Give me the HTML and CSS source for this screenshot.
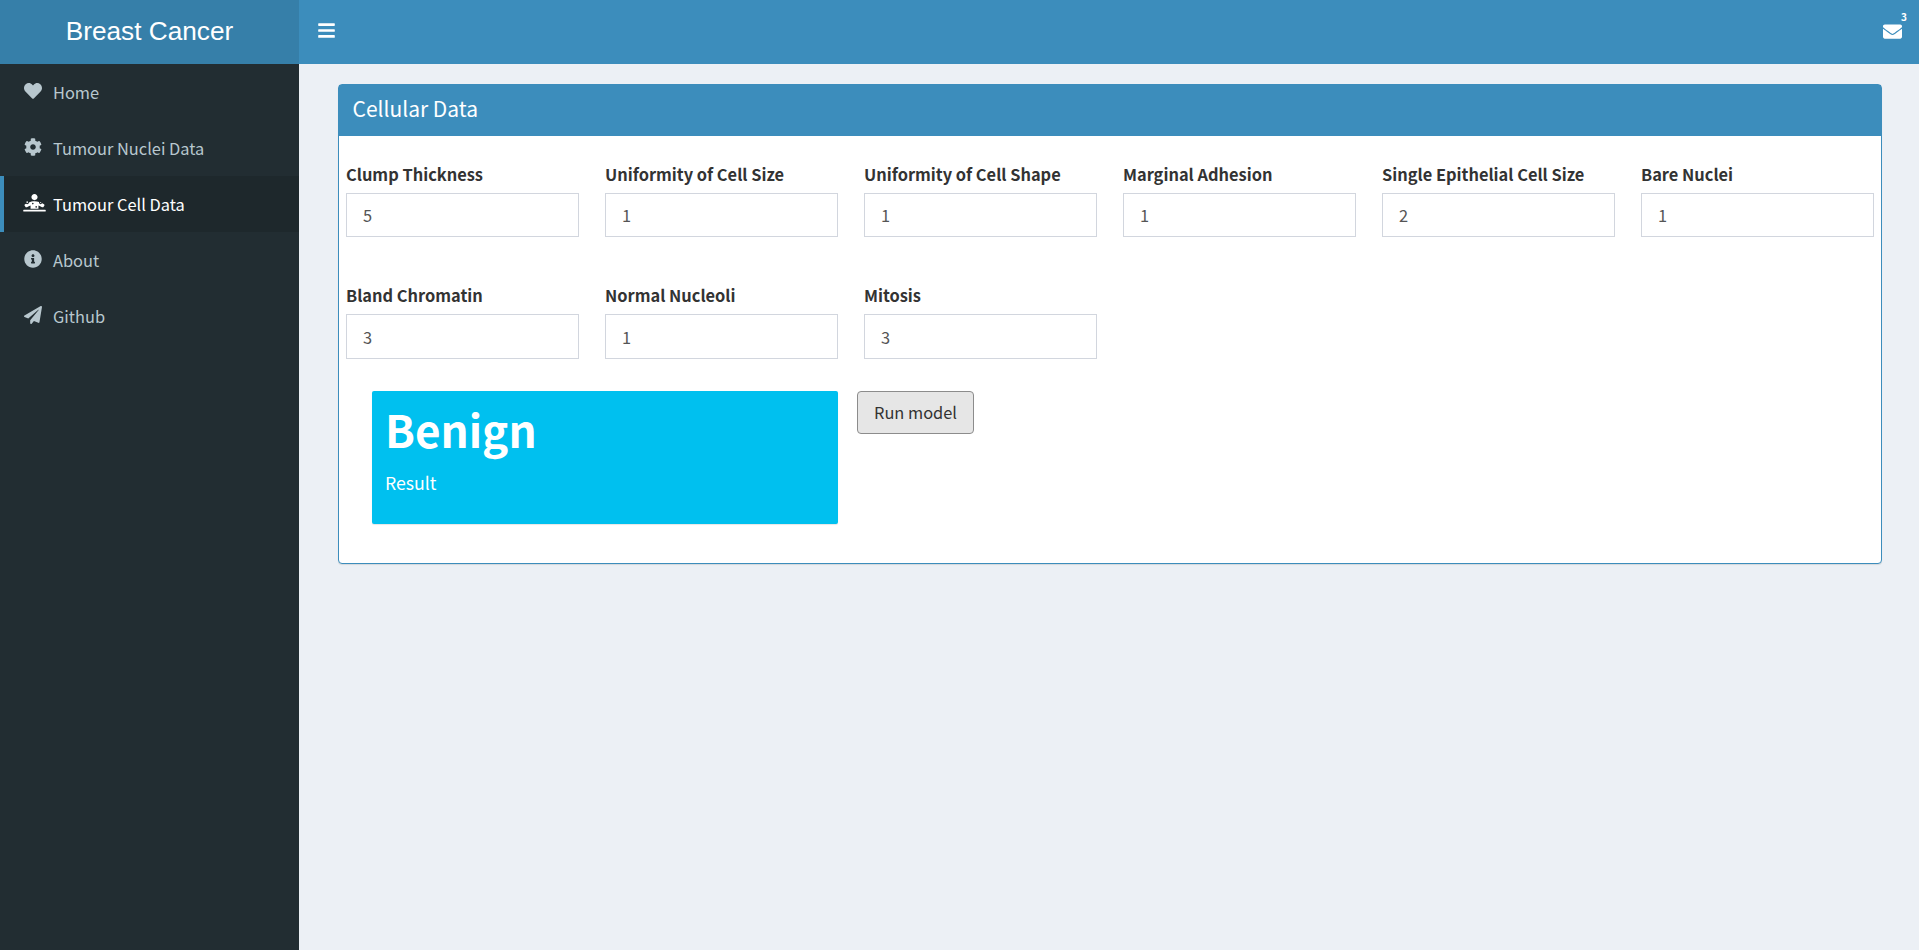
FILE: index.html
```html
<!DOCTYPE html>
<html>
<head>
	<title>Breast Cancer</title>
	<link rel="stylesheet" href="styles.css">
</head>
<body>
	<div class="topbar">
		<div class="logo">Breast Cancer</div>
		<div class="navbar">
			<svg class="toggle" viewBox="0 0 448 512"><path d="M16 132h416c8.837 0 16-7.163 16-16V76c0-8.837-7.163-16-16-16H16C7.163 60 0 67.163 0 76v40c0 8.837 7.163 16 16 16zm0 160h416c8.837 0 16-7.163 16-16v-40c0-8.837-7.163-16-16-16H16c-8.837 0-16 7.163-16 16v40c0 8.837 7.163 16 16 16zm0 160h416c8.837 0 16-7.163 16-16v-40c0-8.837-7.163-16-16-16H16c-8.837 0-16 7.163-16 16v40c0 8.837 7.163 16 16 16z"/></svg>
			<div class="messages">
				<svg class="mail" viewBox="0 0 512 512"><path d="M502.3 190.8c3.9-3.1 9.700-.2 9.700 4.700V400c0 26.500-21.500 48-48 48H48c-26.500 0-48-21.500-48-48V195.600c0-5 5.700-7.800 9.700-4.700 22.400 17.400 52.100 39.500 154.100 113.600 21.100 15.400 56.700 47.800 92.200 47.600 35.700.3 72-32.800 92.300-47.600 102-74.100 131.600-96.300 154-113.700zM256 320c23.200.4 56.600-29.200 73.400-41.400 132.700-96.300 142.800-104.700 173.400-128.700 5.800-4.500 9.200-11.500 9.200-18.900v-19c0-26.500-21.500-48-48-48H48C21.500 64 0 85.500 0 112v19c0 7.400 3.400 14.300 9.200 18.900 30.600 23.900 40.700 32.400 173.400 128.700 16.800 12.200 50.200 41.800 73.400 41.400z"/></svg>
				<span class="badge">3</span>
			</div>
		</div>
	</div>

	<div class="main">
		<ul class="sidebar">
			<li>
				<svg class="icon" viewBox="0 0 512 512"><path d="M462.3 62.600C407.500 15.900 326 24.300 275.700 76.200L256 96.500l-19.700-20.300C186.100 24.300 104.500 15.900 49.700 62.600c-62.800 53.600-66.100 149.800-9.900 207.900l193.500 199.800c12.500 12.900 32.800 12.900 45.300 0l193.500-199.800c56.300-58.100 53-154.300-9.800-207.900z"/></svg>
				<span>Home</span>
			</li>
			<li>
				<svg class="icon" viewBox="0 0 512 512"><path d="M487.400 315.700l-42.600-24.600c4.300-23.200 4.300-47 0-70.200l42.600-24.600c4.900-2.800 7.100-8.600 5.500-14-11.100-35.600-30-67.800-54.700-94.600-3.800-4.100-10-5.100-14.800-2.300L380.800 110c-17.900-15.400-38.500-27.300-60.800-35.100V25.800c0-5.600-3.900-10.500-9.400-11.700-36.700-8.200-74.300-7.800-109.200 0-5.500 1.200-9.400 6.100-9.400 11.700V75c-22.200 7.900-42.800 19.800-60.800 35.100L88.700 85.500c-4.900-2.800-11-1.900-14.800 2.300-24.700 26.700-43.600 58.900-54.700 94.600-1.700 5.400.6 11.200 5.500 14L67.300 221c-4.300 23.200-4.300 47 0 70.200l-42.600 24.600c-4.900 2.800-7.100 8.600-5.500 14 11.100 35.600 30 67.800 54.700 94.600 3.800 4.100 10 5.100 14.800 2.300l42.600-24.600c17.900 15.400 38.500 27.300 60.800 35.100v49.200c0 5.600 3.900 10.500 9.400 11.700 36.700 8.200 74.300 7.800 109.200 0 5.500-1.200 9.400-6.100 9.400-11.700v-49.200c22.200-7.900 42.800-19.800 60.800-35.100l42.600 24.600c4.900 2.800 11 1.900 14.800-2.300 24.700-26.700 43.600-58.900 54.700-94.600 1.500-5.500-.7-11.300-5.600-14.100zM256 336c-44.100 0-80-35.900-80-80s35.900-80 80-80 80 35.900 80 80-35.900 80-80 80z"/></svg>
				<span>Tumour Nuclei Data</span>
			</li>
			<li class="active">
				<svg class="icon icon-wide" viewBox="0 0 640 512"><path d="M496 256c8.800 0 16-7.200 16-16s-7.200-16-16-16-16 7.200-16 16 7.200 16 16 16zm-176-80c48.500 0 88-39.500 88-88S368.500 0 320 0s-88 39.500-88 88 39.500 88 88 88zM59.800 364c10.200 15.300 29.300 17.800 42.900 9.800 16.200-9.600 56.200-31.700 105.300-48.600V416h224v-90.700c49.100 16.800 89.100 39 105.300 48.600 13.600 8 32.700 5.300 42.900-9.800l17.800-26.700c8.800-13.200 7.600-34.600-10-45.100-11.900-7.100-29.700-17-51.100-27.400-28.100 46.100-99.400 17.800-87.700-35.100C409.300 217.200 365.100 208 320 208c-57 0-112.900 14.500-160 32.200-.2 40.200-47.600 63.300-79.200 36-11.200 6-21.300 11.600-28.700 16-17.600 10.500-18.800 31.800-10 45.100L59.800 364zM368 344c13.300 0 24 10.700 24 24s-10.700 24-24 24-24-10.700-24-24 10.700-24 24-24zm-96-96c13.300 0 24 10.700 24 24s-10.700 24-24 24-24-10.700-24-24 10.700-24 24-24zm-160 8c13.300 0 24-10.700 24-24s-10.700-24-24-24-24 10.700-24 24 10.700 24 24 24zm512 192H16c-8.800 0-16 7.200-16 16v16c0 8.800 7.200 16 16 16h608c8.800 0 16-7.200 16-16v-16c0-8.800-7.200-16-16-16z"/></svg>
				<span>Tumour Cell Data</span>
			</li>
			<li>
				<svg class="icon" viewBox="0 0 512 512"><path d="M256 8C119.043 8 8 119.083 8 256c0 136.997 111.043 248 248 248s248-111.003 248-248C504 119.083 392.957 8 256 8zm0 110c23.196 0 42 18.804 42 42s-18.804 42-42 42-42-18.804-42-42 18.804-42 42-42zm56 254c0 6.627-5.373 12-12 12h-88c-6.627 0-12-5.373-12-12v-24c0-6.627 5.373-12 12-12h12v-64h-12c-6.627 0-12-5.373-12-12v-24c0-6.627 5.373-12 12-12h64c6.627 0 12 5.373 12 12v100h12c6.627 0 12 5.373 12 12v24z"/></svg>
				<span>About</span>
			</li>
			<li>
				<svg class="icon" viewBox="0 0 512 512"><path d="M476 3.200L12.500 270.600c-18.100 10.400-15.800 35.600 2.200 43.200L121 358.400l287.300-253.200c5.500-4.900 13.300 2.600 8.600 8.300L176 407v80.500c0 23.600 28.500 32.900 42.500 15.800L282 426l124.600 52.200c14.200 6 30.400-2.900 33-18.200l72-432C515 7.800 493.300-6.800 476 3.200z"/></svg>
				<span>Github</span>
			</li>
		</ul>

		<div class="content">
			<div class="box">
				<div class="box-header">Cellular Data</div>
				<div class="box-body">
					<div class="fields">
						<label class="field"><span>Clump Thickness</span><input type="text" value="5" /></label>
						<label class="field"><span>Uniformity of Cell Size</span><input type="text" value="1" /></label>
						<label class="field"><span>Uniformity of Cell Shape</span><input type="text" value="1" /></label>
						<label class="field"><span>Marginal Adhesion</span><input type="text" value="1" /></label>
						<label class="field"><span>Single Epithelial Cell Size</span><input type="text" value="2" /></label>
						<label class="field"><span>Bare Nuclei</span><input type="text" value="1" /></label>
						<label class="field"><span>Bland Chromatin</span><input type="text" value="3" /></label>
						<label class="field"><span>Normal Nucleoli</span><input type="text" value="1" /></label>
						<label class="field"><span>Mitosis</span><input type="text" value="3" /></label>
					</div>
					<div class="result-row">
						<div class="value-box">
							<h3>Benign</h3>
							<p>Result</p>
						</div>
						<button class="run">Run model</button>
					</div>
				</div>
			</div>
		</div>
	</div>
</body>
</html>
```

FILE: styles.css
```css
html, body{
	height:100%;
}

body{
	margin:0;
	background:#ecf0f5;
	font-family:"Noto Sans CJK SC", "Noto Sans", sans-serif;
	font-size:16.4px;
	line-height:26px;
	color:#333;
	display:flex;
	flex-direction:column;
	overflow:hidden;
}

/* top bar */
.topbar{
	display:flex;
	height:64px;
	flex:none;
}

	.logo{
		width:299px;
		background:#367fa9;
		color:#fff;
		font-family:"Liberation Sans", sans-serif;
		font-size:26.2px;
		line-height:62px;
		text-align:center;
	}

	.navbar{
		flex:1;
		background:#3c8dbc;
		display:flex;
		align-items:center;
		justify-content:space-between;
		padding:0 12px 0 19px;
	}

		.toggle{
			width:17px;
			height:19px;
			fill:#fff;
			margin-bottom:3px;
		}

		.messages{
			display:flex;
			align-items:flex-start;
			padding-bottom:8px;
		}

			.mail{
				width:19px;
				height:19px;
				fill:#fff;
				margin:6px -1px 0 0;
			}

			.badge{
				color:#fff;
				font-size:10px;
				font-weight:700;
				line-height:12px;
				margin-top:-5px;
			}

/* sidebar */
.main{
	flex:1;
	display:flex;
	min-height:0;
}

.sidebar{
	width:299px;
	flex:none;
	background:#222d32;
	margin:0;
	padding:0;
	list-style:none;
	color:#b8c7ce;
}

	.sidebar li{
		height:56px;
		display:flex;
		align-items:center;
		padding-left:24px;
		border-left:0 solid #3c8dbc;
		box-sizing:border-box;
	}

	.sidebar li.active{
		background:#1e282c;
		color:#fff;
		border-left-width:4px;
		padding-left:19px;
	}

	.icon{
		width:18px;
		height:18px;
		fill:currentColor;
		margin-right:11px;
		margin-bottom:2px;
		flex:none;
	}

	.icon-wide{
		width:23px;
		margin-right:7px;
	}

/* box */
.content{
	flex:1;
	padding:20px 37px 0 39px;
}

.box{
	border:1px solid #3c8dbc;
	border-radius:4px;
	background:#fff;
	box-shadow:0 1px 1px rgba(0,0,0,.1);
}

	.box-header{
		background:#3c8dbc;
		color:#fff;
		font-size:21px;
		line-height:31px;
		padding:8px 13.5px 12px;
	}

	.box-body{
		padding:25px 7px 39px;
	}

.fields{
	display:grid;
	grid-template-columns:repeat(6, 233px);
	column-gap:26px;
	row-gap:45px;
}

	.field{
		display:block;
		font-weight:700;
		color:#333;
	}

		.field span{
			display:block;
			margin-bottom:6px;
		}

		.field input{
			display:block;
			box-sizing:border-box;
			width:100%;
			height:44px;
			border:1px solid #d2d6de;
			padding:0 16px;
			font:inherit;
			font-weight:400;
			color:#555;
			outline:0;
		}

		.field:nth-child(n+7) input{
			height:45px;
		}

.result-row{
	display:flex;
	align-items:flex-start;
	gap:19px;
	padding:32px 0 0 26px;
}

	.value-box{
		width:466px;
		height:133px;
		box-sizing:border-box;
		background:#00c0ef;
		color:#fff;
		border-radius:2px;
		padding:11px 13px 0;
		box-shadow:0 1px 1px rgba(0,0,0,.1);
	}

		.value-box h3{
			margin:0 0 13px;
			font-size:44px;
			line-height:55px;
			font-weight:700;
		}

		.value-box p{
			margin:0;
			font-size:17.7px;
			line-height:25px;
		}

	.run{
		width:117px;
		height:43px;
		background:#e6e6e6;
		border:1px solid #8c8c8c;
		border-radius:4px;
		color:#333;
		font:inherit;
		padding:0 0 2px;
	}
```
